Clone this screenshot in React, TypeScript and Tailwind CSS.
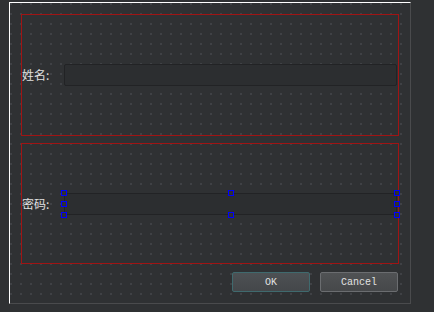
import React from 'react';

const Handle: React.FC = () => (
  <div className="w-[6px] h-[6px] border border-[#0000ff] bg-[#2e3033]" />
);

const FieldRow: React.FC<{ label: string; selected?: boolean }> = ({ label, selected }) => (
  <div className="flex items-center h-full">
    <div className="w-[42px] -ml-[1px] text-[12px] leading-none text-[#e0e0e0] font-['Noto_Sans_CJK_SC',sans-serif]">
      {label}
    </div>
    <div className="relative flex-1 h-[22px] mr-[1px]">
      <div className="h-full rounded-[2px] border border-[#222325] bg-[#2c2e30]" />
      {selected && (
        // selection handles sit on the corners and mid-edges of the widget
        <div className="absolute -inset-[3px] flex justify-between">
          <div className="flex flex-col justify-between">
            <Handle />
            <Handle />
            <Handle />
          </div>
          <div className="flex flex-col justify-between">
            <Handle />
            <Handle />
          </div>
          <div className="flex flex-col justify-between">
            <Handle />
            <Handle />
            <Handle />
          </div>
        </div>
      )}
    </div>
  </div>
);

const App: React.FC = () => {
  return (
    <div className="w-[434px] h-[312px] bg-[#2f3133] pt-[2px] pl-[9px]">
      <div className="w-[402px] h-[302px] border-l border-t border-l-white border-t-white border-r border-b border-r-[#4a4b4d] border-b-[#4a4b4d] bg-[radial-gradient(circle_at_1px_1px,#404246_0.7px,transparent_1px)] bg-[size:10px_10px] pt-[11px] pl-[11px]">
        <div className="w-[378px] h-[122px] border border-[#a01414] pl-[1px]">
          <FieldRow label="姓名:" />
        </div>
        <div className="w-[378px] h-[121px] mt-[7px] border border-[#a01414] pl-[1px]">
          <FieldRow label="密码:" selected />
        </div>
        <div className="flex justify-end gap-[10px] w-[377px] mt-[8px]">
          <button className="w-[78px] h-[20px] rounded-[2px] border border-[#3f6a6e] bg-[linear-gradient(#4d5154,#44474a)] text-[10px] text-[#e2e2e2] font-['Liberation_Mono',monospace]">
            OK
          </button>
          <button className="w-[78px] h-[20px] rounded-[2px] border border-[#6b6d70] bg-[linear-gradient(#505254,#46484a)] text-[10px] text-[#e2e2e2] font-['Liberation_Mono',monospace]">
            Cancel
          </button>
        </div>
      </div>
    </div>
  );
};

export default App;
